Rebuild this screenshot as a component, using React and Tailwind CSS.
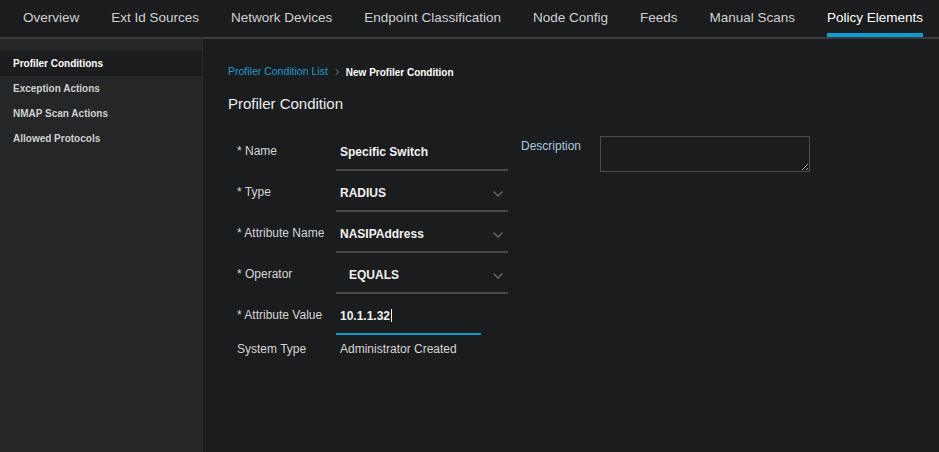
const tabs = [
  "Overview",
  "Ext Id Sources",
  "Network Devices",
  "Endpoint Classification",
  "Node Config",
  "Feeds",
  "Manual Scans",
  "Policy Elements",
];

const sideItems = [
  "Profiler Conditions",
  "Exception Actions",
  "NMAP Scan Actions",
  "Allowed Protocols",
];

const Chevron = () => (
  <svg width="12" height="8" viewBox="0 0 12 8" className="text-[#6b6c6e]">
    <path d="M1.5 1.5 L6 6 L10.5 1.5" fill="none" stroke="currentColor" strokeWidth="1.3" />
  </svg>
);

const Row = ({ label, children }) => (
  <div className="flex items-start h-[41px]">
    <div className="w-[99px] pt-[2px] text-[12px] text-[#d6d6d6] whitespace-nowrap">{label}</div>
    {children}
  </div>
);

const Field = ({ value, select, indent, active }) => (
  <div
    className={`h-[31px] flex items-start justify-between border-b-2 ${
      active ? "w-[145px] border-[#0d9bd4]" : "w-[172px] border-[#47484a]"
    }`}
  >
    <span className={`pt-[3px] text-[12px] font-bold text-[#f2f2f2] ${indent ? "pl-[13px]" : "pl-[4px]"}`}>
      {value}
      {active && <span className="inline-block w-px h-[13px] bg-white align-middle ml-px -mt-[2px]" />}
    </span>
    {select && (
      <span className="pt-[9px] pr-[4px]">
        <Chevron />
      </span>
    )}
  </div>
);

export default function App() {
  return (
    <div
      className="w-[939px] h-[452px] bg-[#1b1c1e] flex flex-col overflow-hidden"
      style={{ fontFamily: '"Liberation Sans", Arial, sans-serif' }}
    >
      <div className="h-[39px] flex items-stretch px-[7px] border-b-2 border-[#3a3b3d] shrink-0">
        {tabs.map((t) => (
          <div
            key={t}
            className={`px-[16px] flex items-center text-[13.5px] whitespace-nowrap shrink-0 relative ${
              t === "Policy Elements" ? "text-white" : "text-[#cfd0d1]"
            }`}
          >
            {t}
            {t === "Policy Elements" && (
              <span className="absolute left-[16px] right-[16px] bottom-0 h-[4px] bg-[#0d9bd4]" />
            )}
          </div>
        ))}
      </div>
      <div className="flex flex-1">
        <div className="w-[203px] bg-[#252627] pt-[12px] shrink-0 border-r border-[#2a2b2c]">
          {sideItems.map((s, i) => (
            <div
              key={s}
              className={`h-[25px] flex items-center pl-[13px] text-[10px] font-bold ${
                i === 0 ? "bg-[#1c1d1f] text-white" : "text-[#cfd0d1]"
              }`}
            >
              {s}
            </div>
          ))}
        </div>
        <div className="flex-1 pl-[25px] pt-[26px]">
          <div className="flex items-center text-[10.5px] h-[14px]">
            <span className="text-[#1f9bd1]">Profiler Condition List</span>
            <svg width="10" height="10" viewBox="0 0 10 10" className="mx-[4px]">
              <path d="M3.5 2 L6.5 5 L3.5 8" fill="none" stroke="#8a8b8d" strokeWidth="1" />
            </svg>
            <span className="text-white font-bold text-[10px]">New Profiler Condition</span>
          </div>
          <div className="mt-[14px] text-[15px] text-[#ececec]">Profiler Condition</div>
          <div className="flex mt-[24px] pl-[9px]">
            <div className="flex flex-col">
              <Row label="* Name">
                <Field value="Specific Switch" />
              </Row>
              <Row label="* Type">
                <Field value="RADIUS" select />
              </Row>
              <Row label="* Attribute Name">
                <Field value="NASIPAddress" select />
              </Row>
              <Row label="* Operator">
                <Field value="EQUALS" select indent />
              </Row>
              <Row label="* Attribute Value">
                <Field value="10.1.1.32" active />
              </Row>
              <div className="flex -mt-[5px]">
                <div className="w-[99px] text-[12px] text-[#d6d6d6]">System Type</div>
                <div className="pl-[4px] text-[12px] text-[#d6d6d6]">Administrator Created</div>
              </div>
            </div>
            <div className="flex items-start ml-[13px] -mt-[4px]">
              <div className="w-[79px] pt-[1px] text-[12px] text-[#a9c9e0]">Description</div>
              <textarea className="w-[210px] h-[36px] bg-[#1b1c1e] border border-[#4b4c4e] outline-none" />
            </div>
          </div>
        </div>
      </div>
    </div>
  );
}
